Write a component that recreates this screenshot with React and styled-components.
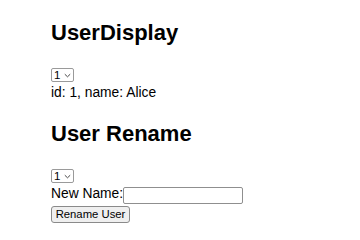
import React, { useState } from 'react';
import styled, { createGlobalStyle } from 'styled-components';

const GlobalStyle = createGlobalStyle`
  html, body {
    margin: 0;
    padding: 0;
    background: #ffffff;
  }
  body {
    font-family: "Liberation Sans", Arial, sans-serif;
    font-size: 13.8px;
    color: #000;
  }
`;

const Page = styled.div`
  padding: 0 0 0 51px;
`;

const Section = styled.section`
  display: flex;
  flex-direction: column;
  align-items: flex-start;
`;

const Heading = styled.h1`
  margin: 20px 0 23px;
  font-size: 22px;
  line-height: 25px;
  font-weight: 700;
`;

const SelectBox = styled.div`
  display: inline-flex;
  align-items: center;
  box-sizing: border-box;
  width: 23px;
  height: 14px;
  border: 1px solid #9a9a9a;
  border-radius: 2px;
  background: #fff;
  padding: 0 2px 0 2px;
  margin-bottom: ${p => p.$gap || 4}px;
`;

const NativeSelect = styled.select`
  appearance: none;
  -webkit-appearance: none;
  border: none;
  background: transparent;
  outline: none;
  padding: 0;
  margin: 0;
  font-family: "Liberation Sans", Arial, sans-serif;
  font-size: 11.5px;
  line-height: 12px;
  height: 12px;
  width: 9px;
  color: #000;
`;

const Chevron = styled.svg`
  width: 7px;
  height: 5px;
  margin-left: 1px;
  flex: none;
`;

const Line = styled.div`
  line-height: 16px;
`;

const Row = styled.div`
  display: flex;
  align-items: flex-start;
  margin-bottom: 2px;
`;

const Label = styled.label`
  line-height: 16px;
  margin-top: -1px;
`;

const TextInput = styled.input`
  box-sizing: border-box;
  width: 120px;
  height: 17px;
  border: 1px solid #8f8f8f;
  border-radius: 2px;
  padding: 0 3px;
  font-family: "Liberation Sans", Arial, sans-serif;
  font-size: 11px;
  outline: none;
`;

const Button = styled.button`
  box-sizing: border-box;
  height: 17px;
  width: 79px;
  padding: 0;
  border: 1px solid #8a8a8a;
  border-radius: 3px;
  background: #efefef;
  font-family: "Liberation Sans", Arial, sans-serif;
  font-size: 11.3px;
  color: #000;
  line-height: 15px;
`;

const users = [
  { id: 1, name: 'Alice' },
  { id: 2, name: 'Bob' },
];

function UserSelect({ value, onChange, gap }) {
  return (
    <SelectBox $gap={gap}>
      <NativeSelect value={value} onChange={e => onChange(Number(e.target.value))}>
        {users.map(u => (
          <option key={u.id} value={u.id}>{u.id}</option>
        ))}
      </NativeSelect>
      <Chevron viewBox="0 0 7 5">
        <path d="M0.8 1.2 L3.5 3.8 L6.2 1.2" fill="none" stroke="#333" strokeWidth="0.9" />
      </Chevron>
    </SelectBox>
  );
}

export default function App() {
  const [shownId, setShownId] = useState(1);
  const [renameId, setRenameId] = useState(1);
  const [newName, setNewName] = useState('');
  const user = users.find(u => u.id === shownId);

  return (
    <>
      <GlobalStyle />
      <Page>
        <Section>
          <Heading>UserDisplay</Heading>
          <UserSelect value={shownId} onChange={setShownId} gap={3} />
          <Line>id: {user.id}, name: {user.name}</Line>
        </Section>
        <Section>
          <Heading as="h2">User Rename</Heading>
          <UserSelect value={renameId} onChange={setRenameId} gap={4} />
          <Row>
            <Label>New Name:</Label>
            <TextInput value={newName} onChange={e => setNewName(e.target.value)} />
          </Row>
          <Button>Rename User</Button>
        </Section>
      </Page>
    </>
  );
}
